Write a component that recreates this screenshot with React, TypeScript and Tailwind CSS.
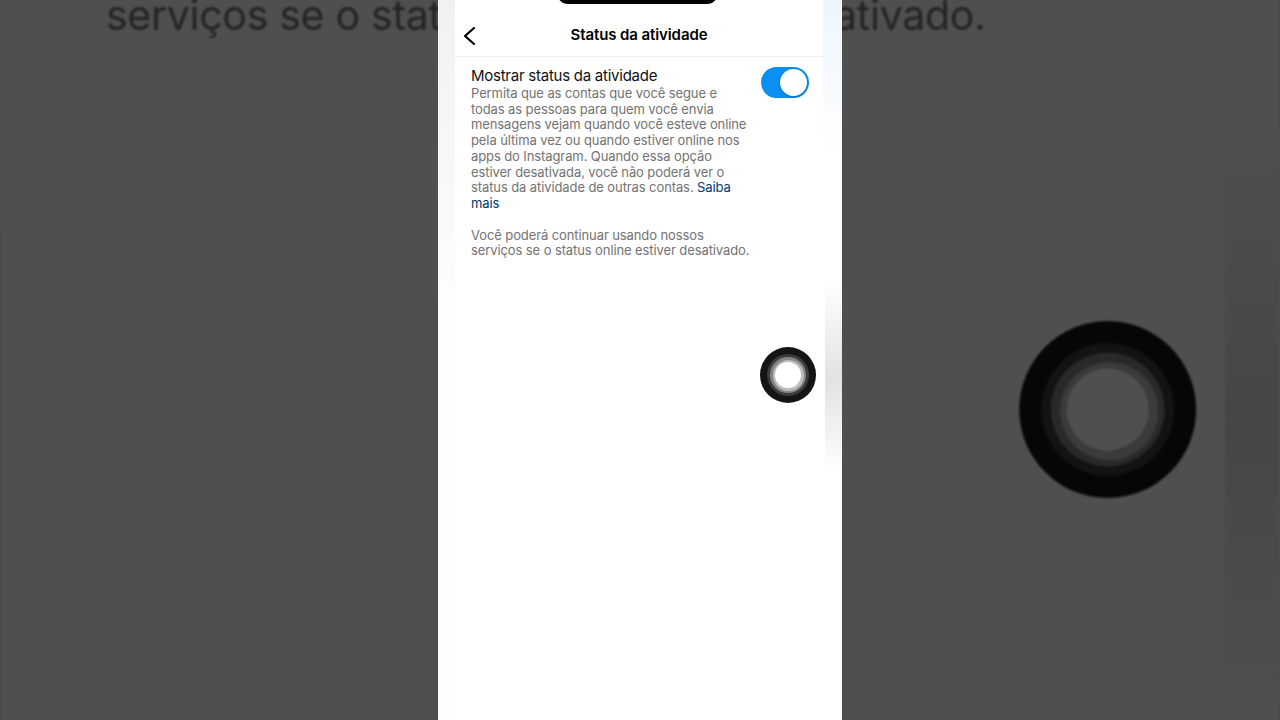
import React from "react";

function Toggle() {
  return (
    <div className="flex h-[31px] w-[48px] shrink-0 items-center justify-end rounded-full bg-[#0a8ff2] p-[2px]">
      <div className="h-[27px] w-[27px] rounded-full bg-white shadow-[0_1px_3px_rgba(0,0,0,0.25)]" />
    </div>
  );
}

function AssistiveTouch() {
  return (
    <div className="absolute left-[322px] top-[347px] flex h-[56px] w-[56px] items-center justify-center rounded-full bg-[#141414]">
      <div className="flex h-[42px] w-[42px] items-center justify-center rounded-full bg-[#3c3c3c]">
        <div className="flex h-[36px] w-[36px] items-center justify-center rounded-full bg-[#858585]">
          <div className="flex h-[31px] w-[31px] items-center justify-center rounded-full bg-[#bdbdbd]">
            <div className="h-[26px] w-[26px] rounded-full bg-white" />
          </div>
        </div>
      </div>
    </div>
  );
}

function Screen() {
  return (
    <div className="relative flex h-[720px] w-[404px] shrink-0 bg-[#fefefe] font-['Inter','Liberation_Sans',sans-serif]">
      <div className="w-[17px] bg-gradient-to-b from-[#f1f1f1] to-[#fefefe] to-[45%]" />
      <div className="flex w-[368px] flex-col bg-white">
        <header className="relative flex h-[57px] shrink-0 items-center justify-center border-b border-[#efefef] pt-[15px]">
          <svg
            className="absolute left-[8px] top-[27px]"
            width="13"
            height="18"
            viewBox="0 0 13 18"
            fill="none"
          >
            <polyline
              points="11,1 2,9 11,17"
              stroke="#000"
              strokeWidth="2.2"
              strokeLinecap="round"
              strokeLinejoin="round"
            />
          </svg>
          <span className="text-[15px] font-semibold tracking-[-0.1px] text-black">
            Status da atividade
          </span>
        </header>
        <div className="flex gap-3 pl-4 pr-[14px] pt-[9px]">
          <div className="flex-1 whitespace-nowrap">
            <p className="text-[15px] leading-[20px] tracking-[-0.25px] text-[#111]">
              Mostrar status da atividade
            </p>
            <p className="text-[13px] leading-[15.7px] tracking-[-0.1px] text-[#737373]">
              Permita que as contas que você segue e<br />
              todas as pessoas para quem você envia<br />
              mensagens vejam quando você esteve online<br />
              pela última vez ou quando estiver online nos<br />
              apps do Instagram. Quando essa opção<br />
              estiver desativada, você não poderá ver o<br />
              status da atividade de outras contas.{" "}
              <span className="text-[#00376b]">Saiba</span>
              <br />
              <span className="text-[#00376b]">mais</span>
            </p>
            <p className="mt-[16px] text-[13px] leading-[15.7px] tracking-[-0.1px] text-[#737373]">
              Você poderá continuar usando nossos
              <br />
              serviços se o status online estiver desativado.
            </p>
          </div>
          <div className="pt-[1px]">
            <Toggle />
          </div>
        </div>
      </div>
      <div className="flex w-[19px] flex-col bg-gradient-to-b from-[#edf5fc] to-white to-[22%]">
        <div className="ml-[2px] mt-[283px] h-[190px] bg-gradient-to-b from-transparent via-[#e2e2e2] to-transparent" />
      </div>
      <div className="absolute left-[119px] top-[-18px] h-[22px] w-[161px] rounded-[20px] bg-black" />
      <AssistiveTouch />
    </div>
  );
}

export default function App() {
  return (
    <div className="relative h-[720px] w-[1280px] overflow-hidden bg-[#4c4c4c]">
      <div className="absolute inset-0 flex justify-center" aria-hidden="true">
        <div className="origin-[202px_359px] scale-[3.16] brightness-[0.31] blur-[0.35px]">
          <Screen />
        </div>
      </div>
      <div className="relative flex justify-center">
        <Screen />
      </div>
    </div>
  );
}
